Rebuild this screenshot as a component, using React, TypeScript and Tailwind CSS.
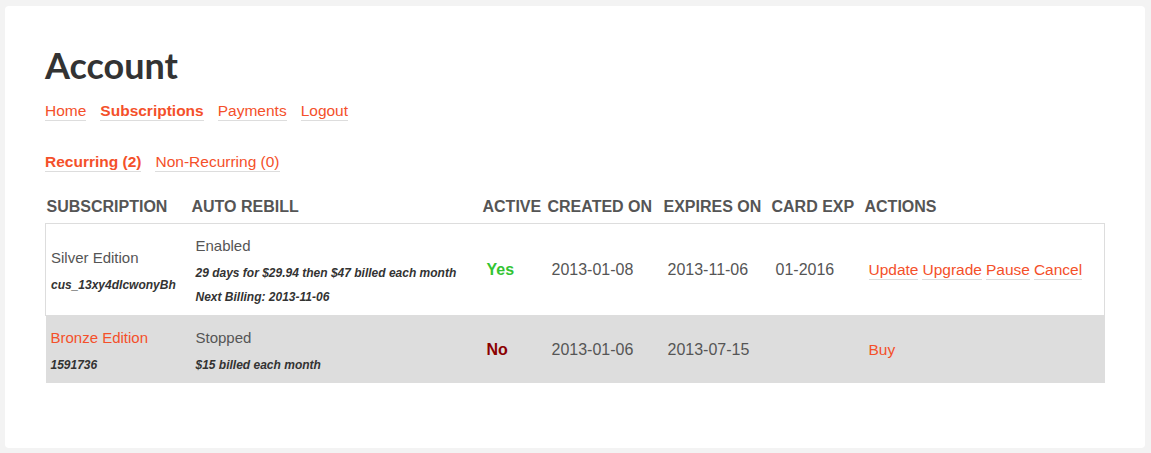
const link = "inline-block border-b border-[#dddddd] text-[#f4502a] leading-[18px]";

interface Sub {
  name: string;
  id: string;
  nameLink: boolean;
  rebill: string;
  notes: string[];
  active: boolean;
  created: string;
  expires: string;
  cardExp: string;
  actions: string[];
}

const subs: Sub[] = [
  {
    name: "Silver Edition",
    id: "cus_13xy4dIcwonyBh",
    nameLink: false,
    rebill: "Enabled",
    notes: ["29 days for $29.94 then $47 billed each month", "Next Billing: 2013-11-06"],
    active: true,
    created: "2013-01-08",
    expires: "2013-11-06",
    cardExp: "01-2016",
    actions: ["Update", "Upgrade", "Pause", "Cancel"],
  },
  {
    name: "Bronze Edition",
    id: "1591736",
    nameLink: true,
    rebill: "Stopped",
    notes: ["$15 billed each month"],
    active: false,
    created: "2013-01-06",
    expires: "2013-07-15",
    cardExp: "",
    actions: ["Buy"],
  },
];

const headers = ["Subscription", "Auto Rebill", "Active", "Created On", "Expires On", "Card Exp", "Actions"];

export default function App() {
  return (
    <div className="min-h-screen bg-[#f3f3f3] pt-[6px] pr-[6px] pb-[6px] pl-[5px] font-['Liberation_Sans',Arial,sans-serif]">
      <div className="rounded-[4px] bg-white px-[40px] pt-[37px] pb-[65px]">
        <h1 className="font-['Lato',sans-serif] text-[36px] font-bold leading-[44px] text-[#333333]">Account</h1>

        {/* Main nav */}
        <nav className="mt-[15px] flex gap-[14px] text-[15.5px]">
          <a className={link}>Home</a>
          <a className={`${link} font-bold`}>Subscriptions</a>
          <a className={link}>Payments</a>
          <a className={link}>Logout</a>
        </nav>

        {/* Tabs */}
        <div className="mt-[32px] flex gap-[14px] text-[15.5px]">
          <a className={`${link} font-bold`}>Recurring (2)</a>
          <a className={link}>Non-Recurring (0)</a>
        </div>

        <table className="mt-[26px] w-full table-fixed border-collapse text-[#555555]">
          <colgroup>
            <col className="w-[145px]" />
            <col className="w-[291px]" />
            <col className="w-[65px]" />
            <col className="w-[116px]" />
            <col className="w-[108px]" />
            <col className="w-[93px]" />
            <col />
          </colgroup>
          <thead>
            <tr>
              {headers.map((h) => (
                <th
                  key={h}
                  className="pb-[7px] pl-[1px] text-left text-[16px] font-bold uppercase leading-[18px] whitespace-nowrap"
                >
                  {h}
                </th>
              ))}
            </tr>
          </thead>
          <tbody>
            {subs.map((s, i) => (
              <tr key={s.id} className={i % 2 === 0 ? "border border-[#dddddd] bg-white" : "bg-[#dddddd]"}>
                <td className="pt-[11px] pb-[6px] pl-[5px] align-middle">
                  <div className={`text-[15px] leading-[22px] ${s.nameLink ? "text-[#f4502a]" : ""}`}>{s.name}</div>
                  <div className="mt-[4px] text-[12px] font-bold italic leading-[24px] text-[#333333]">{s.id}</div>
                </td>
                <td className="pt-[11px] pb-[6px] pl-[5px] align-middle">
                  <div className="text-[15px] leading-[22px]">{s.rebill}</div>
                  <div className="mt-[4px]">
                    {s.notes.map((n) => (
                      <div key={n} className="text-[12px] font-bold italic leading-[24px] text-[#333333] whitespace-nowrap">
                        {n}
                      </div>
                    ))}
                  </div>
                </td>
                <td className="pt-[9px] pb-[8px] pl-[5px] align-middle">
                  <span className={`text-[16px] font-bold ${s.active ? "text-[#33c433]" : "text-[#8b0000]"}`}>
                    {s.active ? "Yes" : "No"}
                  </span>
                </td>
                <td className="pt-[9px] pb-[8px] pl-[5px] align-middle text-[16px]">{s.created}</td>
                <td className="pt-[9px] pb-[8px] pl-[5px] align-middle text-[16px]">{s.expires}</td>
                <td className="pt-[9px] pb-[8px] pl-[5px] align-middle text-[16px]">{s.cardExp}</td>
                <td className="pt-[9px] pb-[8px] pl-[5px] align-middle">
                  <div className="flex gap-[4px] text-[15.5px] whitespace-nowrap">
                    {s.actions.map((a) =>
                      s.actions.length > 1 ? (
                        <a key={a} className={link}>{a}</a>
                      ) : (
                        <a key={a} className="text-[#f4502a]">{a}</a>
                      )
                    )}
                  </div>
                </td>
              </tr>
            ))}
          </tbody>
        </table>
      </div>
    </div>
  );
}
